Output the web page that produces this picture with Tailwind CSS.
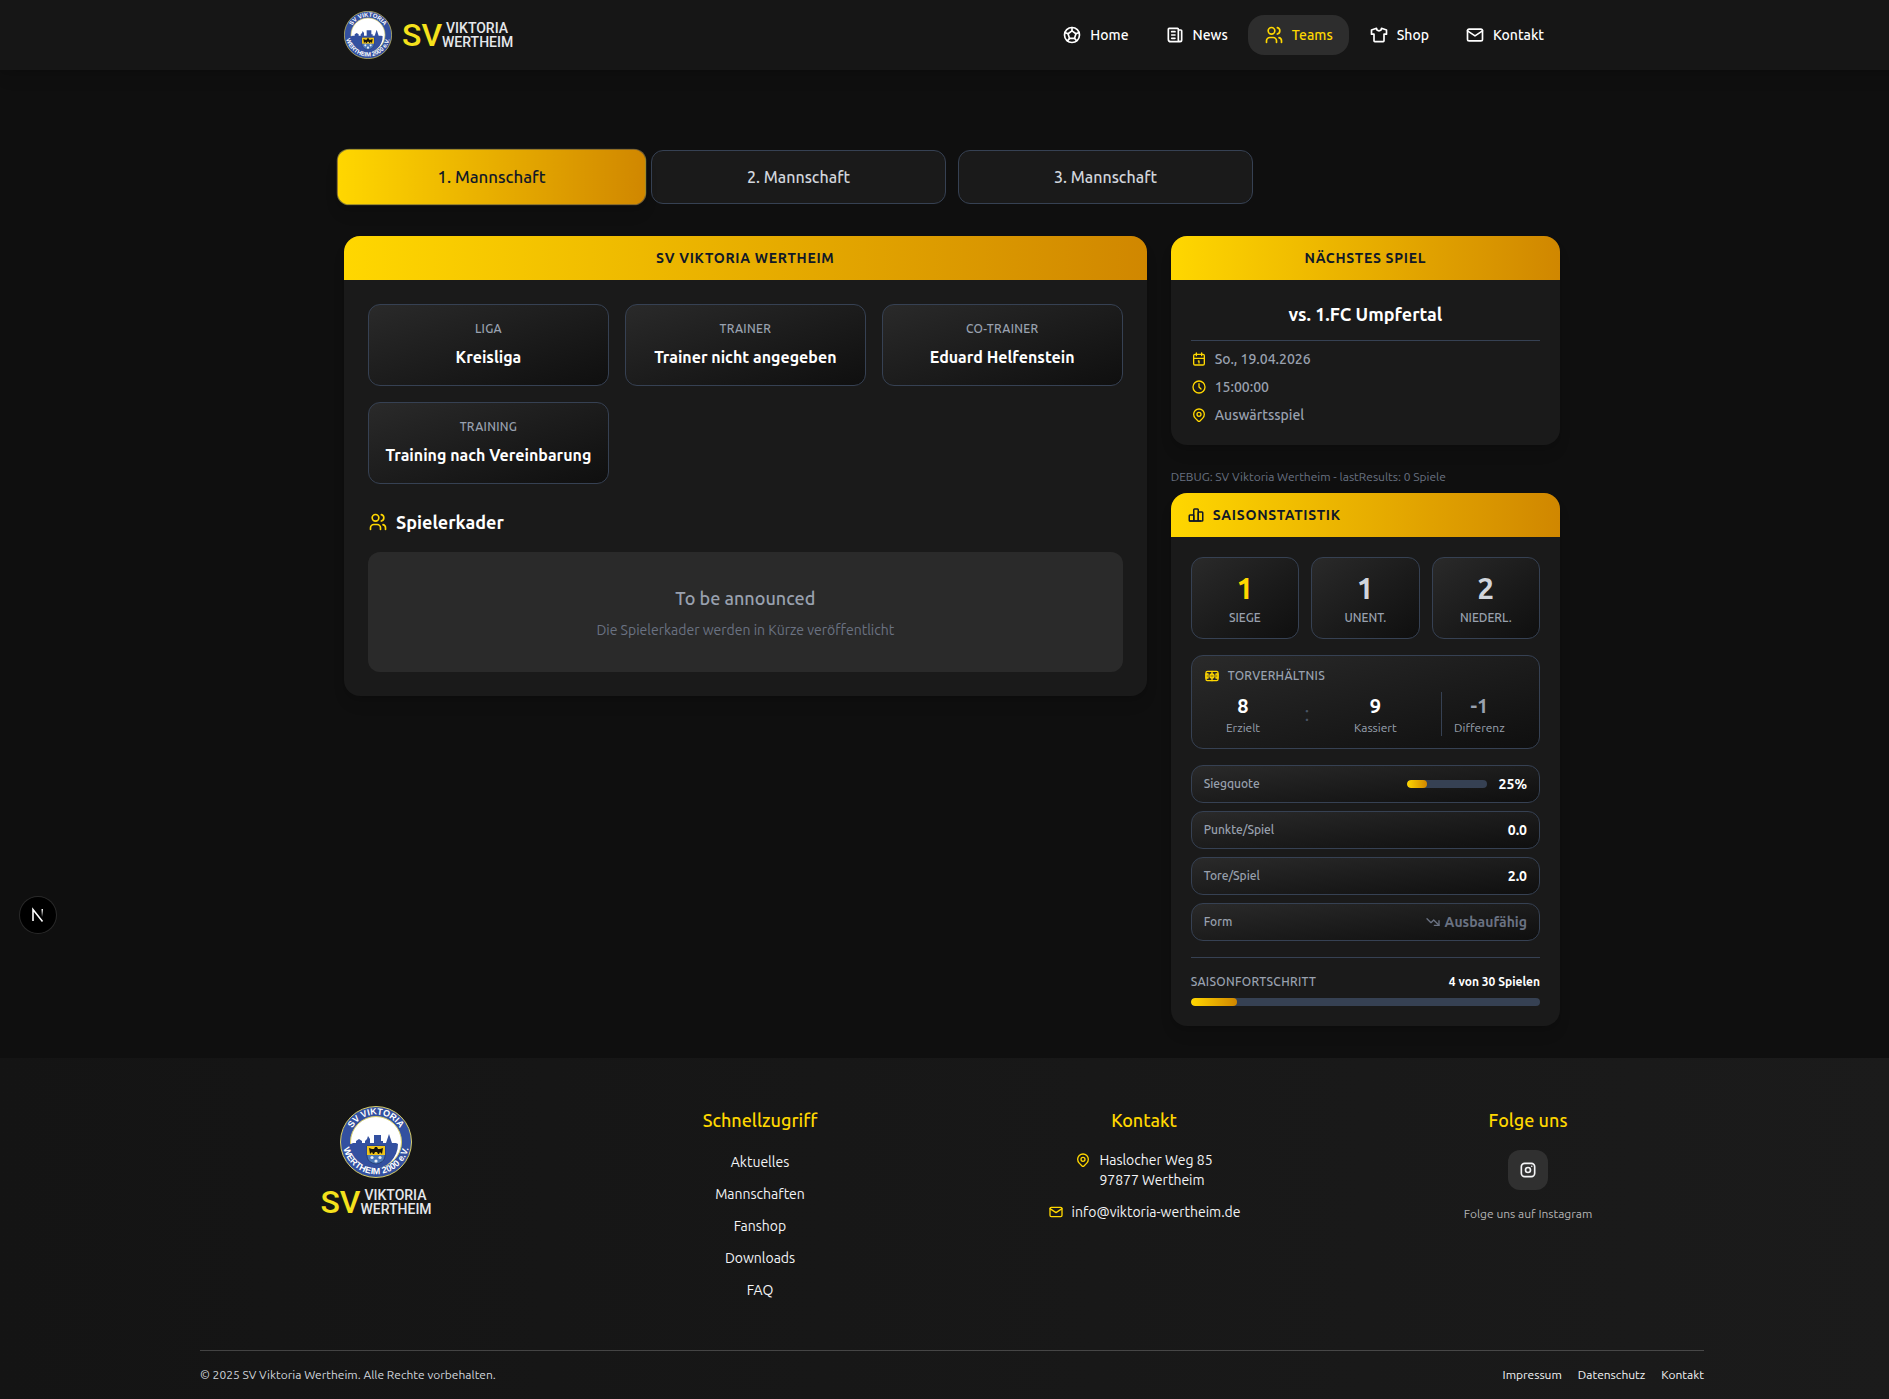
<!DOCTYPE html>
<html lang="de">
<head>
<meta charset="utf-8">
<title>SV Viktoria Wertheim – Teams</title>
<meta name="viewport" content="width=device-width, initial-scale=1">
<script src="https://cdn.jsdelivr.net/npm/@tailwindcss/browser@4"></script>
</head>
<body class="bg-[#0f0f0f] font-['Ubuntu','Noto_Sans',sans-serif] text-white">
<!-- Icon sprite -->
<svg class="hidden" aria-hidden="true">
  <symbol id="i-ball" viewBox="0 0 24 24"><circle cx="12" cy="12" r="9"/><path d="M12 7l4.76 3.45l-1.76 5.55h-6l-1.76 -5.55z"/><path d="M12 7v-4m3 13l2.5 3m-.74 -8.55l3.74 -1.45m-11.44 7.05l-2.56 2.95m.74 -8.55l-3.74 -1.45"/></symbol>
  <symbol id="i-news" viewBox="0 0 24 24"><path d="M16 6h3a1 1 0 0 1 1 1v11a2 2 0 0 1 -4 0v-13a1 1 0 0 0 -1 -1h-10a1 1 0 0 0 -1 1v12a3 3 0 0 0 3 3h11"/><path d="M8 8h4M8 12h4M8 16h4"/></symbol>
  <symbol id="i-users" viewBox="0 0 24 24"><circle cx="9" cy="7" r="4"/><path d="M3 21v-2a4 4 0 0 1 4 -4h4a4 4 0 0 1 4 4v2"/><path d="M16 3.13a4 4 0 0 1 0 7.75"/><path d="M21 21v-2a4 4 0 0 0 -3 -3.85"/></symbol>
  <symbol id="i-shirt" viewBox="0 0 24 24"><path d="M15 4l6 2v5h-3v8a1 1 0 0 1 -1 1h-10a1 1 0 0 1 -1 -1v-8h-3v-5l6 -2a3 3 0 0 0 6 0"/></symbol>
  <symbol id="i-mail" viewBox="0 0 24 24"><path d="M3 7a2 2 0 0 1 2 -2h14a2 2 0 0 1 2 2v10a2 2 0 0 1 -2 2h-14a2 2 0 0 1 -2 -2v-10z"/><path d="M3 7l9 6l9 -6"/></symbol>
  <symbol id="i-calendar" viewBox="0 0 24 24"><path d="M4 7a2 2 0 0 1 2 -2h12a2 2 0 0 1 2 2v12a2 2 0 0 1 -2 2h-12a2 2 0 0 1 -2 -2v-12z"/><path d="M16 3v4M8 3v4M4 11h16M11 15h1M12 15v3"/></symbol>
  <symbol id="i-clock" viewBox="0 0 24 24"><circle cx="12" cy="12" r="9"/><path d="M12 7v5l3 3"/></symbol>
  <symbol id="i-pin" viewBox="0 0 24 24"><circle cx="12" cy="11" r="3"/><path d="M17.657 16.657l-4.243 4.243a2 2 0 0 1 -2.827 0l-4.244 -4.243a8 8 0 1 1 11.314 0z"/></symbol>
  <symbol id="i-chart" viewBox="0 0 24 24"><path d="M3 13a1 1 0 0 1 1 -1h4a1 1 0 0 1 1 1v6a1 1 0 0 1 -1 1h-4a1 1 0 0 1 -1 -1z"/><path d="M15 9a1 1 0 0 1 1 -1h4a1 1 0 0 1 1 1v10a1 1 0 0 1 -1 1h-4a1 1 0 0 1 -1 -1z"/><path d="M9 5a1 1 0 0 1 1 -1h4a1 1 0 0 1 1 1v14a1 1 0 0 1 -1 1h-4a1 1 0 0 1 -1 -1z"/><path d="M4 20h14"/></symbol>
  <symbol id="i-field" viewBox="0 0 24 24"><circle cx="12" cy="12" r="3"/><path d="M3 9h3v6h-3zM18 9h3v6h-3z"/><path d="M3 7a2 2 0 0 1 2 -2h14a2 2 0 0 1 2 2v10a2 2 0 0 1 -2 2h-14a2 2 0 0 1 -2 -2z"/><path d="M12 5v14"/></symbol>
  <symbol id="i-down" viewBox="0 0 24 24"><path d="M3 7l6 6l4 -4l8 8"/><path d="M21 10v7h-7"/></symbol>
  <symbol id="i-insta" viewBox="0 0 24 24"><rect x="4" y="4" width="16" height="16" rx="4"/><circle cx="12" cy="12" r="3"/><path d="M16.5 7.5v.01"/></symbol>
  <symbol id="crest" viewBox="0 0 72 72">
    <circle cx="36" cy="36" r="35.5" fill="#3350a0" stroke="#d9cf6a"/>
    <circle cx="36" cy="36" r="25.5" fill="#fff" stroke="#d9cf6a"/>
    <path d="M11 38l2-1h3v-2l3-2 3 2v2h3v-2l2-2 1-3 2 3v4h4v-8h7v6h2v2h3l3-9 3 9h4l2 1a25 25 0 0 1-50 0z" fill="#3350a0"/>
    <path d="M27 40h18v9c0 6-4 8-9 9c-5-1-9-3-9-9z" fill="#4a77b8" stroke="#1c2c55" stroke-width=".6"/>
    <path d="M27 40h18v9h-18z" fill="#f0c419"/>
    <path d="M29 42l3 1 2 0 1-2h2l1 2h2l3-1-1 6-2-2-1 2h-1l-1-2h-2l-1 2h-1l-1-2-2 2z" fill="#15130a"/>
    <g fill="#e6edf5"><circle cx="32" cy="51.500" r="1.600"/><circle cx="40" cy="51.500" r="1.600"/><circle cx="36" cy="55" r="1.600"/></g>
    <path id="arc-top" d="M8.500 36a27.500 27.500 0 0 1 55 0" fill="none"/>
    <path id="arc-bottom" d="M5 22a33.500 33.500 0 1 0 62 0" fill="none"/>
    <g fill="#fff" font-family="Liberation Sans, sans-serif" font-weight="700" font-size="9" text-anchor="middle">
      <text><textPath href="#arc-top" startOffset="50%">SV VIKTORIA</textPath></text>
      <text><textPath href="#arc-bottom" startOffset="50%">WERTHEIM 2000 e.V.</textPath></text>
    </g>
  </symbol>
</svg>

<div class="relative overflow-hidden">
<div class="-mr-[15px]">
  <header class="bg-[#161616] shadow-lg">
    <div class="mx-auto flex h-[70px] max-w-7xl items-center justify-between px-8">
      <a href="#" class="flex items-center gap-2.5" aria-label="SV Viktoria Wertheim">
        <svg class="size-12"><use href="#crest"/></svg>
        <span class="flex items-center font-['Roboto',sans-serif]">
          <span class="text-[32px] leading-7 font-medium text-[#f5e11c]">SV</span>
          <span class="flex flex-col text-sm leading-[14px] font-medium text-gray-200"><span class="pl-1">VIKTORIA</span><span>WERTHEIM</span></span>
        </span>
      </a>
      <nav class="flex gap-1 text-sm font-medium">
        <a href="#" class="flex h-10 items-center gap-2 rounded-2xl px-4"><svg class="size-5 fill-none stroke-current stroke-2" stroke-linecap="round" stroke-linejoin="round"><use href="#i-ball"/></svg>Home</a>
        <a href="#" class="flex h-10 items-center gap-2 rounded-2xl px-4"><svg class="size-5 fill-none stroke-current stroke-2" stroke-linecap="round" stroke-linejoin="round"><use href="#i-news"/></svg>News</a>
        <a href="#" aria-current="page" class="flex h-10 items-center gap-2 rounded-2xl bg-[#2d2d2d] px-4 text-[#ffd700]"><svg class="size-5 fill-none stroke-current stroke-2" stroke-linecap="round" stroke-linejoin="round"><use href="#i-users"/></svg>Teams</a>
        <a href="#" class="flex h-10 items-center gap-2 rounded-2xl px-4"><svg class="size-5 fill-none stroke-current stroke-2" stroke-linecap="round" stroke-linejoin="round"><use href="#i-shirt"/></svg>Shop</a>
        <a href="#" class="flex h-10 items-center gap-2 rounded-2xl px-4"><svg class="size-5 fill-none stroke-current stroke-2" stroke-linecap="round" stroke-linejoin="round"><use href="#i-mail"/></svg>Kontakt</a>
      </nav>
    </div>
  </header>

  <main class="mx-auto max-w-7xl px-8 pt-20 pb-8">
    <div class="mb-8 grid grid-cols-4 gap-3 font-medium">
      <button type="button" class="h-[54px] scale-105 rounded-xl border border-gray-700/60 bg-linear-to-r from-[#ffd700] to-[#d08700] text-gray-900 shadow-lg">1. Mannschaft</button>
      <button type="button" class="h-[54px] rounded-xl border border-gray-700 bg-[#1a1a1a] text-gray-300">2. Mannschaft</button>
      <button type="button" class="h-[54px] rounded-xl border border-gray-700 bg-[#1a1a1a] text-gray-300">3. Mannschaft</button>
    </div>

    <div class="grid grid-cols-3 items-start gap-6">
      <section class="col-span-2 overflow-hidden rounded-2xl bg-[#1a1a1a] shadow-lg">
        <h1 class="bg-linear-to-r from-[#ffd700] to-[#d08700] py-3 text-center text-sm font-semibold tracking-wider text-gray-900">SV VIKTORIA WERTHEIM</h1>
        <div class="p-6">
          <dl class="grid grid-cols-3 gap-4 text-center">
            <div class="rounded-xl border border-gray-700 bg-linear-to-br from-[#2a2a2a] to-[#0f0f0f] py-4"><dt class="mb-2 text-xs font-medium tracking-wide text-gray-400">LIGA</dt><dd class="font-semibold">Kreisliga</dd></div>
            <div class="rounded-xl border border-gray-700 bg-linear-to-br from-[#2a2a2a] to-[#0f0f0f] py-4"><dt class="mb-2 text-xs font-medium tracking-wide text-gray-400">TRAINER</dt><dd class="font-semibold">Trainer nicht angegeben</dd></div>
            <div class="rounded-xl border border-gray-700 bg-linear-to-br from-[#2a2a2a] to-[#0f0f0f] py-4"><dt class="mb-2 text-xs font-medium tracking-wide text-gray-400">CO-TRAINER</dt><dd class="font-semibold">Eduard Helfenstein</dd></div>
            <div class="rounded-xl border border-gray-700 bg-linear-to-br from-[#2a2a2a] to-[#0f0f0f] py-4"><dt class="mb-2 text-xs font-medium tracking-wide text-gray-400">TRAINING</dt><dd class="font-semibold">Training nach Vereinbarung</dd></div>
          </dl>
          <h2 class="mt-6 mb-4 flex items-center gap-2 text-lg font-semibold"><svg class="size-5 fill-none stroke-[#ffd700] stroke-2" stroke-linecap="round" stroke-linejoin="round"><use href="#i-users"/></svg>Spielerkader</h2>
          <div class="rounded-xl bg-[#2a2a2a] p-8 text-center">
            <p class="mb-2 text-lg font-medium text-gray-400">To be announced</p>
            <p class="text-sm text-gray-500">Die Spielerkader werden in Kürze veröffentlicht</p>
          </div>
        </div>
      </section>

      <aside>
        <section class="mb-6 overflow-hidden rounded-2xl bg-[#1a1a1a] shadow-lg">
          <h2 class="bg-linear-to-r from-[#ffd700] to-[#d08700] py-3 text-center text-sm font-semibold tracking-wider text-gray-900">NÄCHSTES SPIEL</h2>
          <div class="p-5">
            <p class="mb-2 border-b border-gray-700 pb-3 text-center text-lg font-semibold">vs. 1.FC Umpfertal</p>
            <ul class="space-y-2 text-sm font-medium text-gray-400">
              <li class="flex items-center gap-2"><svg class="size-4 fill-none stroke-[#ffd700] stroke-2" stroke-linecap="round" stroke-linejoin="round"><use href="#i-calendar"/></svg>So., 19.04.2026</li>
              <li class="flex items-center gap-2"><svg class="size-4 fill-none stroke-[#ffd700] stroke-2" stroke-linecap="round" stroke-linejoin="round"><use href="#i-clock"/></svg>15:00:00</li>
              <li class="flex items-center gap-2"><svg class="size-4 fill-none stroke-[#ffd700] stroke-2" stroke-linecap="round" stroke-linejoin="round"><use href="#i-pin"/></svg>Auswärtsspiel</li>
            </ul>
          </div>
        </section>

        <p class="mb-2 text-xs text-gray-500">DEBUG: SV Viktoria Wertheim - lastResults: 0 Spiele</p>

        <section class="overflow-hidden rounded-2xl bg-[#1a1a1a] shadow-lg">
          <h2 class="flex items-center gap-2 bg-linear-to-r from-[#ffd700] to-[#d08700] px-4 py-3 text-sm font-semibold tracking-wider text-gray-900"><svg class="size-[18px] fill-none stroke-current stroke-2" stroke-linecap="round" stroke-linejoin="round"><use href="#i-chart"/></svg>SAISONSTATISTIK</h2>
          <div class="p-5">
            <dl class="mb-4 grid grid-cols-3 gap-3 text-center">
              <div class="flex flex-col-reverse gap-1 rounded-xl border border-gray-700 bg-linear-to-br from-[#2a2a2a] to-[#0f0f0f] p-3"><dt class="text-xs font-medium text-gray-400">SIEGE</dt><dd class="text-3xl font-semibold text-[#ffd700]">1</dd></div>
              <div class="flex flex-col-reverse gap-1 rounded-xl border border-gray-700 bg-linear-to-br from-[#2a2a2a] to-[#0f0f0f] p-3"><dt class="text-xs font-medium text-gray-400">UNENT.</dt><dd class="text-3xl font-semibold text-gray-300">1</dd></div>
              <div class="flex flex-col-reverse gap-1 rounded-xl border border-gray-700 bg-linear-to-br from-[#2a2a2a] to-[#0f0f0f] p-3"><dt class="text-xs font-medium text-gray-400">NIEDERL.</dt><dd class="text-3xl font-semibold text-gray-300">2</dd></div>
            </dl>

            <div class="mb-4 rounded-xl border border-gray-700 bg-linear-to-br from-[#2a2a2a] to-[#0f0f0f] p-3">
              <h3 class="mb-2 flex items-center gap-2 text-xs font-medium tracking-wide text-gray-400"><svg class="size-4 fill-none stroke-[#ffd700] stroke-2" stroke-linecap="round" stroke-linejoin="round"><use href="#i-field"/></svg>TORVERHÄLTNIS</h3>
              <div class="flex items-center justify-around text-center">
                <div><div class="text-xl font-semibold">8</div><div class="text-xs text-gray-400">Erzielt</div></div>
                <div class="text-xl text-gray-600">:</div>
                <div><div class="text-xl font-semibold">9</div><div class="text-xs text-gray-400">Kassiert</div></div>
                <div class="border-l border-gray-700 pl-3"><div class="text-xl font-semibold text-gray-400">-1</div><div class="text-xs text-gray-400">Differenz</div></div>
              </div>
            </div>

            <dl class="space-y-2 text-sm">
              <div class="flex items-center justify-between rounded-xl border border-gray-700 bg-linear-to-br from-[#2a2a2a] to-[#0f0f0f] px-3 py-2"><dt class="text-xs font-medium text-gray-400">Siegquote</dt><dd class="flex items-center gap-3 font-semibold"><span class="h-2 w-20 overflow-hidden rounded-full bg-gray-700"><span class="block h-full rounded-full bg-linear-to-r from-[#ffd700] to-[#d08700]" style="width:25%"></span></span>25%</dd></div>
              <div class="flex items-center justify-between rounded-xl border border-gray-700 bg-linear-to-br from-[#2a2a2a] to-[#0f0f0f] px-3 py-2"><dt class="text-xs font-medium text-gray-400">Punkte/Spiel</dt><dd class="font-semibold">0.0</dd></div>
              <div class="flex items-center justify-between rounded-xl border border-gray-700 bg-linear-to-br from-[#2a2a2a] to-[#0f0f0f] px-3 py-2"><dt class="text-xs font-medium text-gray-400">Tore/Spiel</dt><dd class="font-semibold">2.0</dd></div>
              <div class="flex items-center justify-between rounded-xl border border-gray-700 bg-linear-to-br from-[#2a2a2a] to-[#0f0f0f] px-3 py-2"><dt class="text-xs font-medium text-gray-400">Form</dt><dd class="flex items-center gap-1 font-semibold text-gray-500"><svg class="size-4 fill-none stroke-current stroke-2" stroke-linecap="round" stroke-linejoin="round"><use href="#i-down"/></svg>Ausbaufähig</dd></div>
            </dl>

            <div class="mt-4 border-t border-gray-700 pt-4">
              <div class="mb-2 flex justify-between text-xs"><span class="font-medium tracking-wide text-gray-400">SAISONFORTSCHRITT</span><span class="font-semibold">4 von 30 Spielen</span></div>
              <div class="h-2 overflow-hidden rounded-full bg-gray-700"><div class="h-full rounded-full bg-linear-to-r from-[#ffd700] to-[#d08700]" style="width:13.3%"></div></div>
            </div>
          </div>
        </section>
      </aside>
    </div>
  </main>

  <footer class="bg-linear-to-r from-[#141414] to-[#1b1b1b] pt-12 pb-4">
    <div class="mx-auto max-w-[1536px] px-4">
      <div class="grid grid-cols-4 gap-8 pb-12 text-center text-sm text-gray-100">
        <div class="flex flex-col items-center gap-2.5">
          <svg class="size-[72px]"><use href="#crest"/></svg>
          <span class="flex items-center text-left font-['Roboto',sans-serif]">
            <span class="text-[32px] leading-7 font-medium text-[#f5e11c]">SV</span>
            <span class="flex flex-col text-sm leading-[14px] font-medium text-gray-200"><span class="pl-1">VIKTORIA</span><span>WERTHEIM</span></span>
          </span>
        </div>
        <div>
          <h3 class="mb-4 text-lg font-medium text-[#ffd700]">Schnellzugriff</h3>
          <ul class="space-y-2 leading-6">
            <li><a href="#">Aktuelles</a></li><li><a href="#">Mannschaften</a></li><li><a href="#">Fanshop</a></li><li><a href="#">Downloads</a></li><li><a href="#">FAQ</a></li>
          </ul>
        </div>
        <div>
          <h3 class="mb-4 text-lg font-medium text-[#ffd700]">Kontakt</h3>
          <address class="flex flex-col items-center gap-3 not-italic">
            <p class="flex items-start gap-2 text-left"><svg class="mt-0.5 size-4 fill-none stroke-[#ffd700] stroke-2" stroke-linecap="round" stroke-linejoin="round"><use href="#i-pin"/></svg><span>Haslocher Weg 85<br>97877 Wertheim</span></p>
            <a href="mailto:info@viktoria-wertheim.de" class="flex items-center gap-2"><svg class="size-4 fill-none stroke-[#ffd700] stroke-2" stroke-linecap="round" stroke-linejoin="round"><use href="#i-mail"/></svg>info@viktoria-wertheim.de</a>
          </address>
        </div>
        <div class="flex flex-col items-center">
          <h3 class="mb-4 text-lg font-medium text-[#ffd700]">Folge uns</h3>
          <a href="#" aria-label="Instagram" class="flex size-10 items-center justify-center rounded-xl bg-[#303030]"><svg class="size-5 fill-none stroke-current stroke-2" stroke-linecap="round" stroke-linejoin="round"><use href="#i-insta"/></svg></a>
          <p class="mt-4 text-xs text-[#b4b4b4]">Folge uns auf Instagram</p>
        </div>
      </div>
      <div class="flex justify-between border-t border-white/20 pt-4 text-xs text-gray-300">
        <p>© 2025 SV Viktoria Wertheim. Alle Rechte vorbehalten.</p>
        <nav class="flex gap-4 text-gray-100"><a href="#">Impressum</a><a href="#">Datenschutz</a><a href="#">Kontakt</a></nav>
      </div>
    </div>
  </footer>
</div>

<button type="button" aria-label="Entwicklerwerkzeuge" class="absolute top-[897px] left-5 flex size-9 items-center justify-center rounded-full bg-black ring-1 ring-[#2a2a2a]">
  <svg class="size-4" viewBox="0 0 16 16" fill="none" stroke-width="1.600"><defs><linearGradient id="fade" x1="0" y1="0" x2="0" y2="1"><stop stop-color="#fff"/><stop offset="1" stop-color="#fff" stop-opacity="0"/></linearGradient></defs><path d="M3 14V2.500L12.500 14.500" stroke="#fff"/><path d="M11.500 2h1.500v8h-1.500z" fill="url(#fade)"/></svg>
</button>
</div>
</body>
</html>
